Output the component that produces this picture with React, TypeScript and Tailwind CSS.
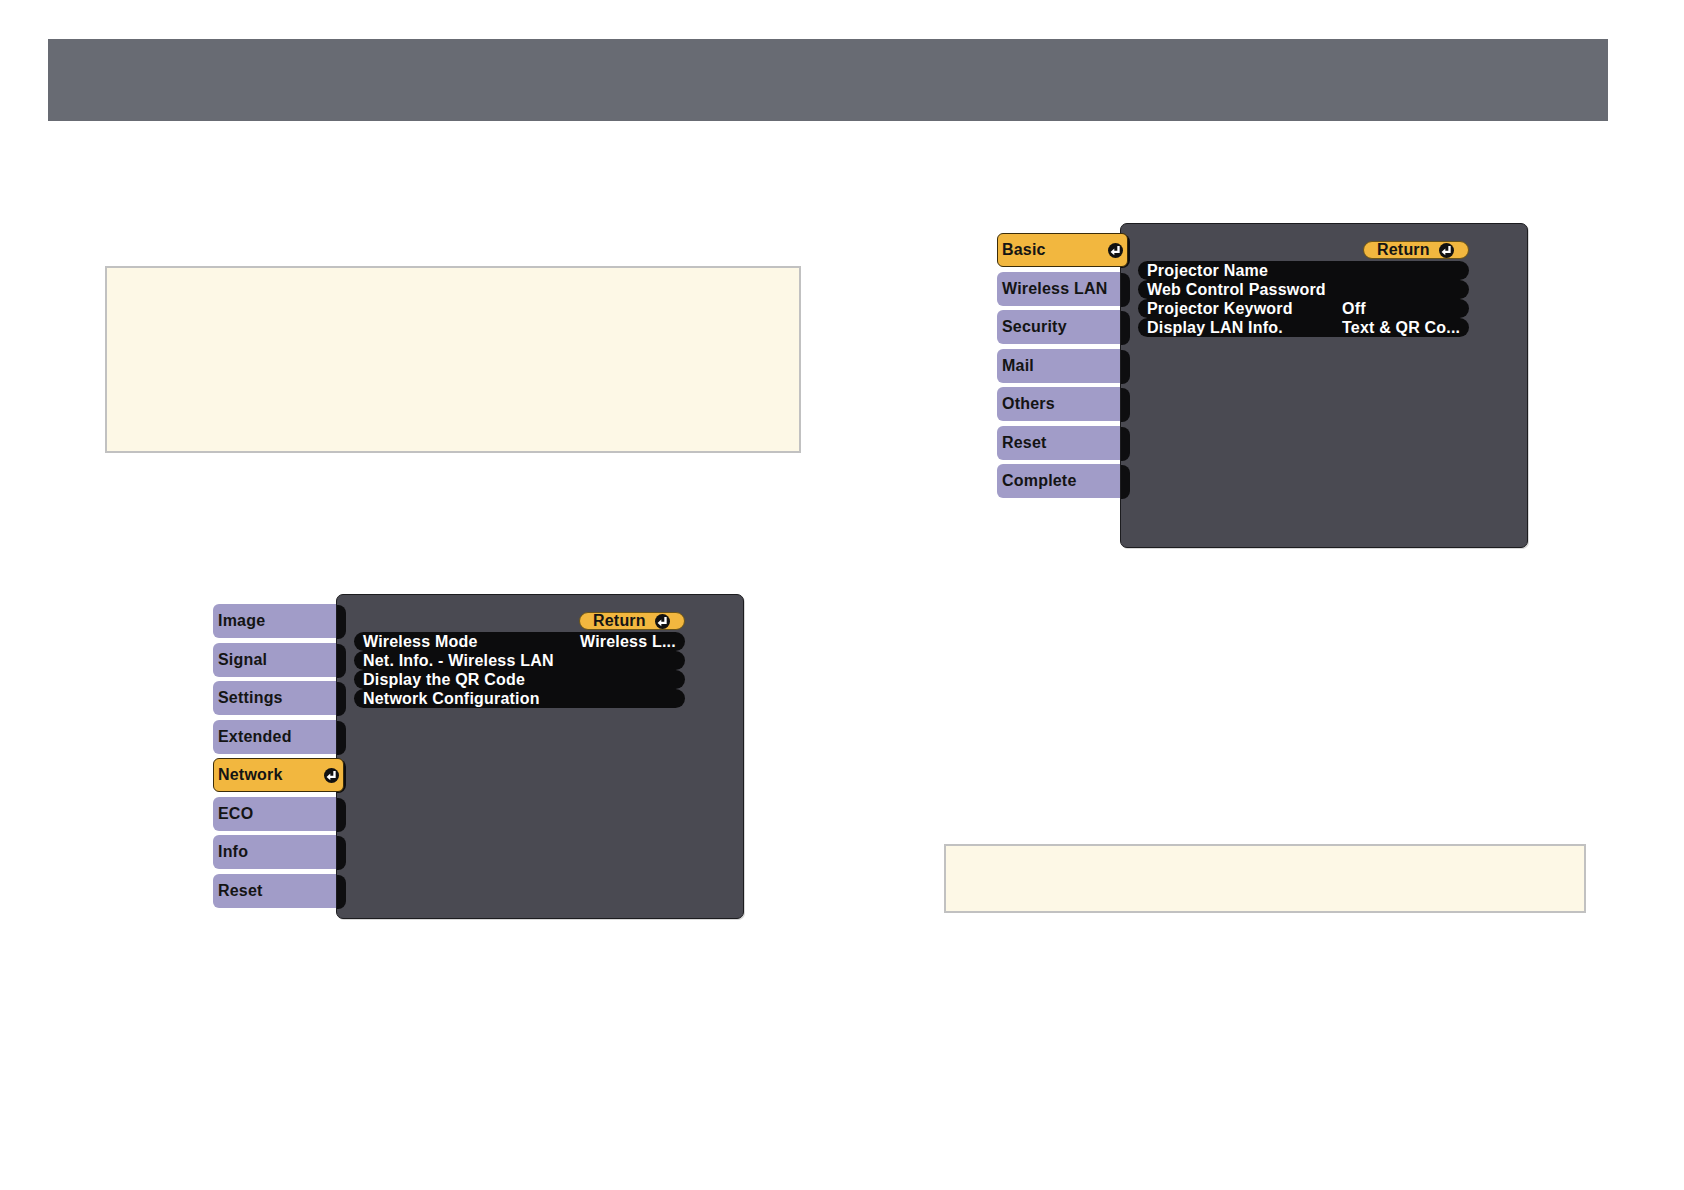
import React from "react";

const font = { fontFamily: '"Liberation Sans", Arial, sans-serif' };

function ReturnIcon({ size = 14 }: { size?: number }) {
  return (
    <svg width={size} height={size} viewBox="0 0 14 14" className="shrink-0">
      <circle cx="7" cy="7" r="7" fill="#111" />
      <path d="M9.8 2.8 V8.3 H5.4" stroke="#fff" strokeWidth="2.2" fill="none" />
      <polygon points="2.4,8.3 5.9,5.2 5.9,11.4" fill="#fff" />
    </svg>
  );
}

type Row = { label: string; value?: string };

function OsdMenu({
  tabs,
  active,
  rows,
  valueX,
}: {
  tabs: string[];
  active: number;
  rows: Row[];
  valueX: number;
}) {
  return (
    <div className="flex items-start" style={font}>
      <div className="flex flex-col gap-[4.5px] mt-[10px] w-[123px]">
        {tabs.map((t, i) =>
          i === active ? (
            <div
              key={t}
              className="relative z-10 w-[131px] h-[34px] rounded-[6px] bg-[#f2b73f] border border-[#3a2c0a] flex items-center justify-between pl-[4px] pr-[4px] text-[16px] font-bold text-[#141414] tracking-[0.2px]"
            >
              <span>{t}</span>
              <ReturnIcon size={15} />
            </div>
          ) : (
            <div
              key={t}
              className="h-[34px] rounded-l-[6px] bg-[#a19cc8] flex items-center pl-[5px] text-[16px] font-bold text-[#141414] tracking-[0.2px]"
            >
              {t}
            </div>
          )
        )}
      </div>
      <div className="flex w-[408px] h-[325px] bg-[#4a4a52] rounded-[7px] border border-[#1c1c1f] shadow-[1px_1px_0_#d8d8d8] overflow-hidden">
        <div className="flex flex-col gap-[4.5px] pt-[10px] w-[9px] shrink-0">
          {tabs.map((t) => (
            <div key={t} className="h-[34px] w-[9px] bg-[#0e0e10] rounded-r-[8px]" />
          ))}
        </div>
        <div className="flex flex-col pt-[17px] pl-[8px] w-[339px]">
          <div className="self-end flex items-center gap-[9px] h-[18px] w-[106px] rounded-full bg-[#f2b73f] border border-[#6b5418] pl-[13px] text-[16px] font-bold text-[#141414] tracking-[0.2px] leading-none">
            <span>Return</span>
            <ReturnIcon size={15} />
          </div>
          <div className="flex flex-col mt-[2px]">
            {rows.map((r) => (
              <div
                key={r.label}
                className="relative h-[19px] rounded-full bg-[#0c0c0d] flex items-center pl-[9px] text-[16px] font-bold text-white leading-none tracking-[0.2px] whitespace-nowrap"
              >
                <span>{r.label}</span>
                {r.value && (
                  <span className="absolute top-1/2 -translate-y-1/2" style={{ left: valueX }}>
                    {r.value}
                  </span>
                )}
              </div>
            ))}
          </div>
        </div>
      </div>
    </div>
  );
}

export default function App() {
  return (
    <div className="w-[1684px] h-[1190px] bg-white relative overflow-hidden">
      <div className="ml-[48px] mt-[39px] w-[1560px] h-[82px] bg-[#686b73]" />
      <div className="flex">
        <div className="ml-[105px] w-[696px] flex flex-col">
          <div className="mt-[145px] h-[187px] bg-[#fdf8e6] border-2 border-[#c1c1c1]" />
          <div className="mt-[141px] ml-[108px]">
            <OsdMenu
              tabs={["Image", "Signal", "Settings", "Extended", "Network", "ECO", "Info", "Reset"]}
              active={4}
              valueX={226}
              rows={[
                { label: "Wireless Mode", value: "Wireless L..." },
                { label: "Net. Info. - Wireless LAN" },
                { label: "Display the QR Code" },
                { label: "Network Configuration" },
              ]}
            />
          </div>
        </div>
        <div className="ml-[143px] w-[642px] flex flex-col">
          <div className="mt-[102px] ml-[53px]">
            <OsdMenu
              tabs={["Basic", "Wireless LAN", "Security", "Mail", "Others", "Reset", "Complete"]}
              active={0}
              valueX={204}
              rows={[
                { label: "Projector Name" },
                { label: "Web Control Password" },
                { label: "Projector Keyword", value: "Off" },
                { label: "Display LAN Info.", value: "Text & QR Co..." },
              ]}
            />
          </div>
          <div className="mt-[296px] h-[69px] bg-[#fdf8e6] border-2 border-[#c1c1c1]" />
        </div>
      </div>
    </div>
  );
}
